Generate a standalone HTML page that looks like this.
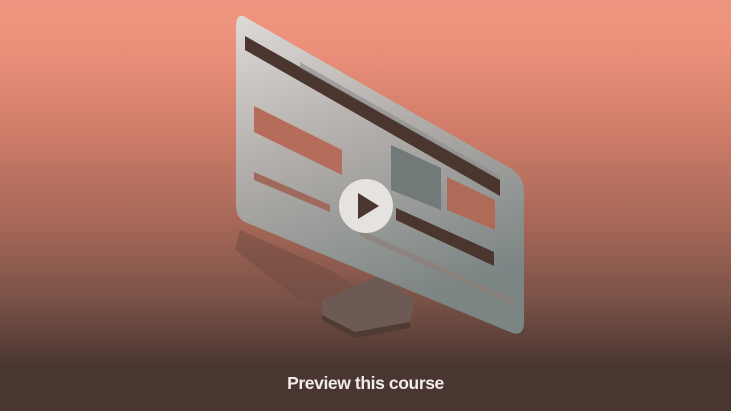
<!DOCTYPE html>
<html><head><meta charset="utf-8"><style>
html,body{margin:0;padding:0;}
body{width:731px;height:411px;overflow:hidden;position:relative;
background:linear-gradient(180deg,#ef9580 0px,#ee917c 40px,#cf7d69 130px,#a86858 220px,#7a5247 300px,#4a3631 365px,#4a3631 411px);
font-family:"Liberation Sans",sans-serif;}
svg{position:absolute;left:0;top:0}
.t{position:absolute;left:0;width:731px;top:373px;text-align:center;color:#f1ece9;font-weight:bold;font-size:17.5px;letter-spacing:-0.4px}
</style></head><body>
<svg width="731" height="411" viewBox="0 0 731 411">
<defs>
<linearGradient id="scr" x1="0" y1="0" x2="0.3" y2="1">
<stop offset="0" stop-color="#dedad7"/><stop offset="0.45" stop-color="#b3aeab"/><stop offset="1" stop-color="#7b8584"/>
</linearGradient>
</defs>
<polygon points="240,230 330,270 420,330 300,300 235,250" fill="#6e4a40" opacity="0.5"/>
<polygon points="322,300 380,275 415,300 410,322 355,332 322,315" fill="#6e5a55"/>
<polygon points="322,315 355,332 410,322 410,328 355,338 322,320" fill="#4f3a34"/>
<path d="M245,17 L510,168 Q524,176 524,192 L524,322 Q524,338 510,332 L245,222 Q236,218 236,205 L236,28 Q236,12 245,17 Z" fill="url(#scr)"/>
<polygon points="245,36 500,180 500,196 245,50" fill="#4a352f"/>
<polygon points="300,62 500,176 500,180 300,68" fill="#8a8a88" opacity="0.6"/>
<polygon points="254,106 342,150 342,175 254,132" fill="#b56c5a"/>
<polygon points="391,145 441,168 441,210 391,190" fill="#727a79"/>
<polygon points="447,177 495,200 495,230 447,210" fill="#b06a58"/>
<polygon points="254,172 330,205 330,212 254,180" fill="#9e6a5c"/>
<polygon points="396,208 494,252 494,266 396,220" fill="#4a352f"/>
<polygon points="360,230 515,300 515,306 360,236" fill="#8f7f79" opacity="0.7"/>
<circle cx="366" cy="206" r="27" fill="#e6e2e0"/>
<polygon points="358,193 358,219 379,206" fill="#4a352f"/>
</svg>
<div class="t">Preview this course</div>
</body></html>
